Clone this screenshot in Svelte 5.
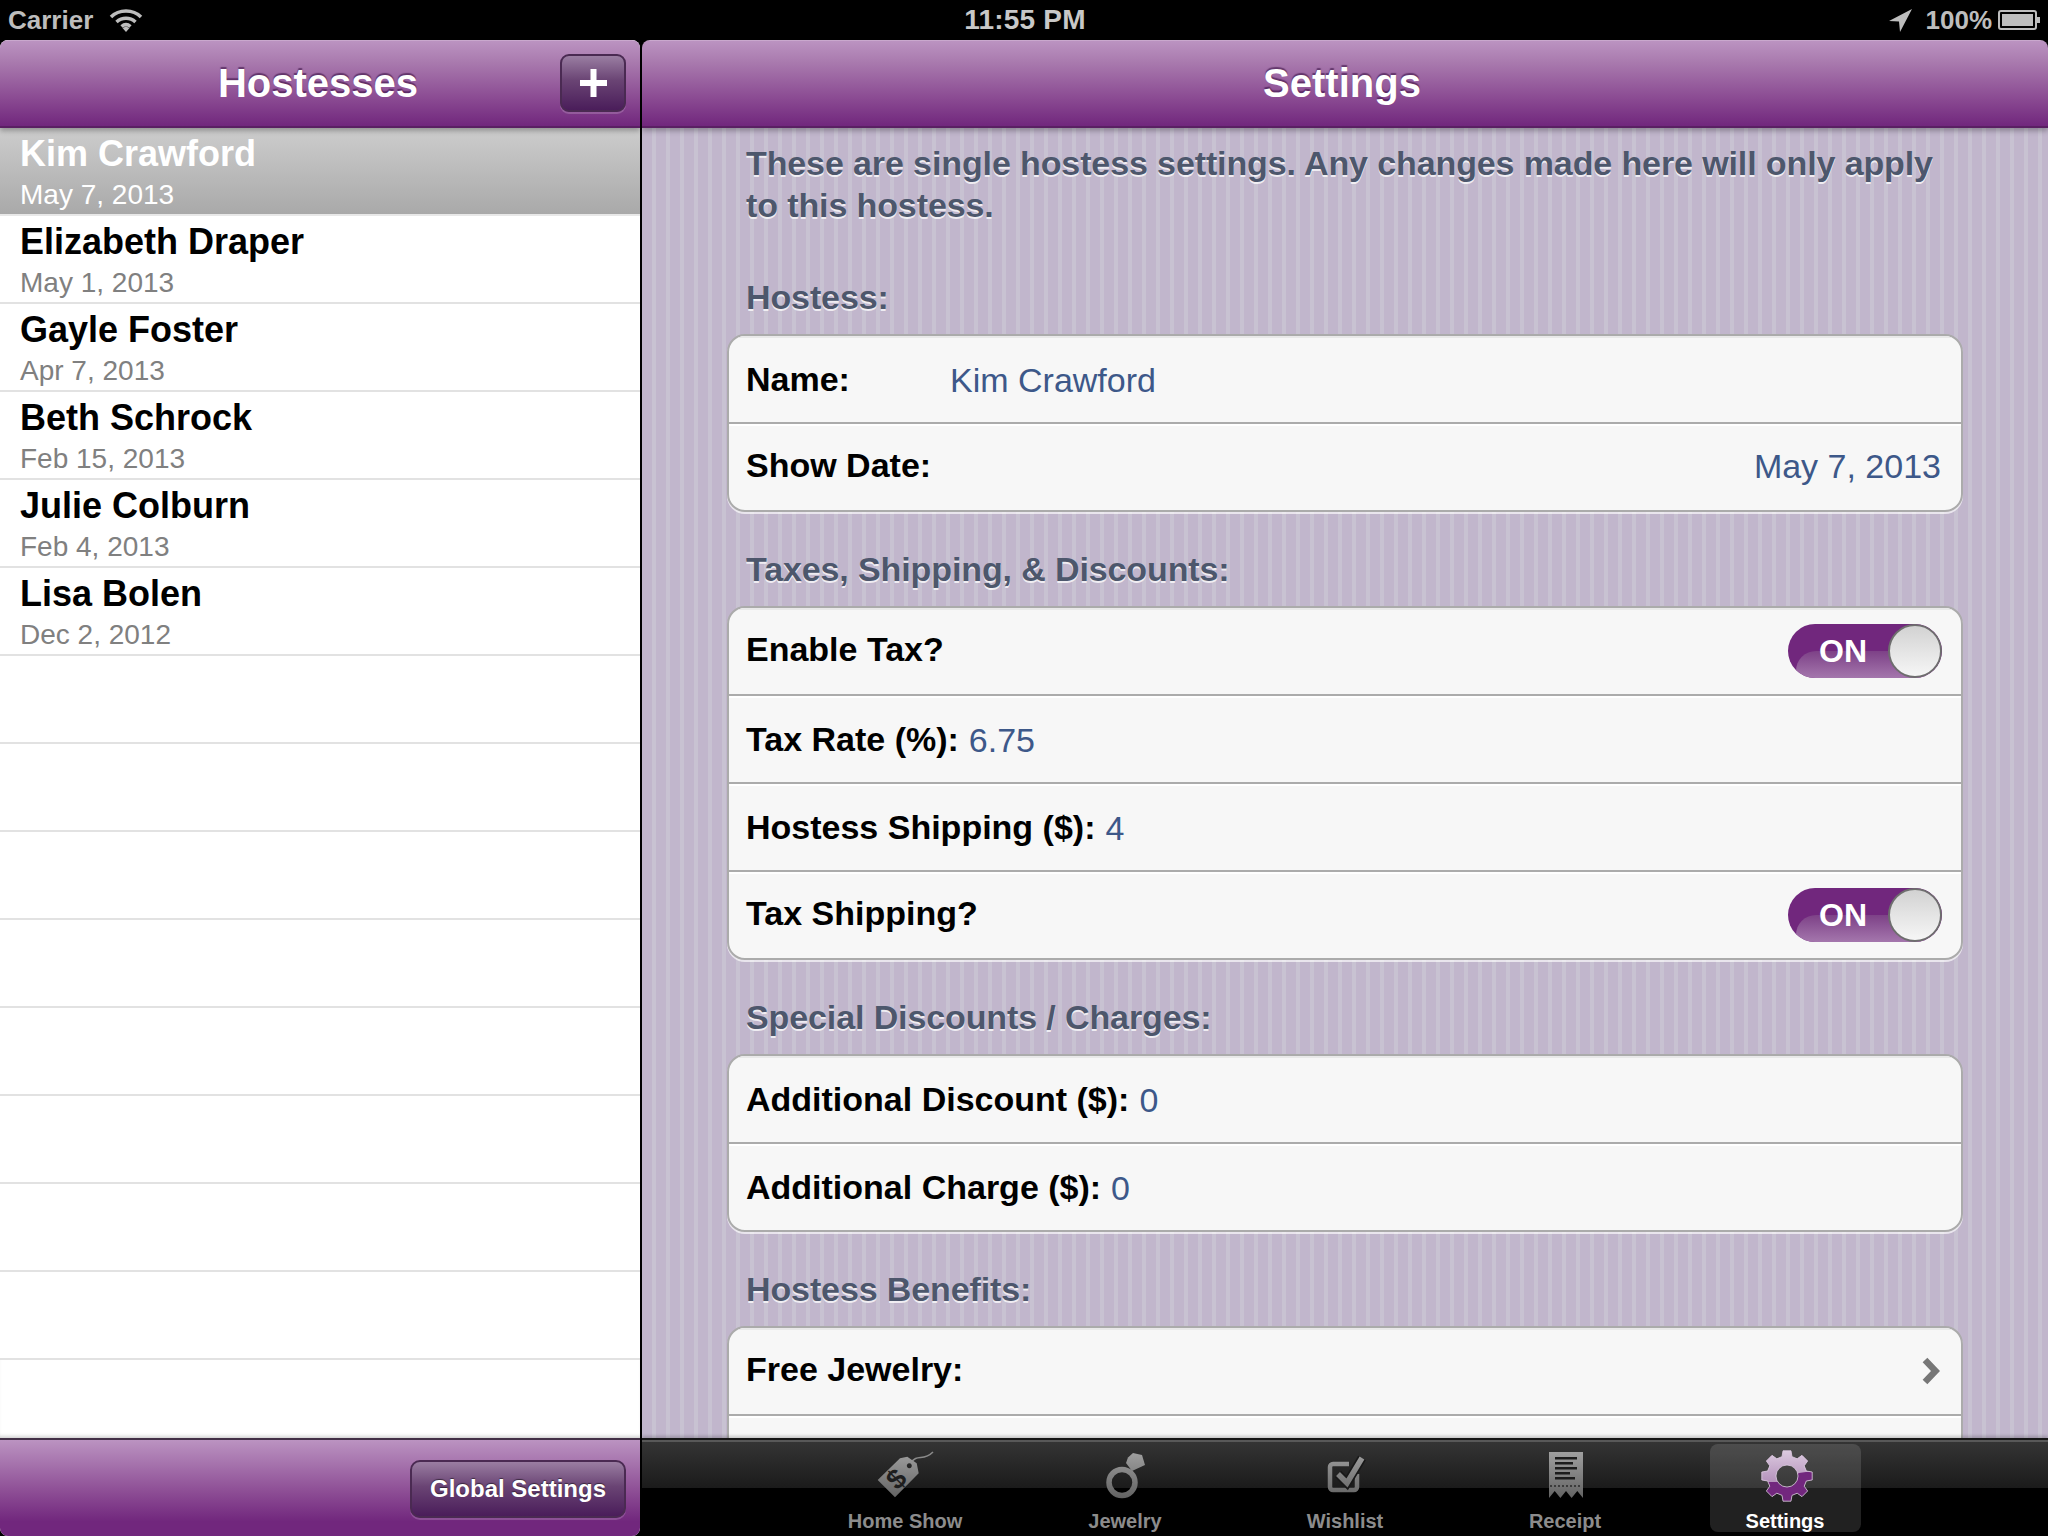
<script>
  const hostesses = [
    ['Kim Crawford', 'May 7, 2013'],
    ['Elizabeth Draper', 'May 1, 2013'],
    ['Gayle Foster', 'Apr 7, 2013'],
    ['Beth Schrock', 'Feb 15, 2013'],
    ['Julie Colburn', 'Feb 4, 2013'],
    ['Lisa Bolen', 'Dec 2, 2012'],
    ...Array(8).fill(['', ''])
  ];

  function gearPath(cx, cy, ro, ri, hole, n) {
    let d = '';
    const step = (Math.PI * 2) / n;
    for (let i = 0; i < n; i++) {
      const a = -Math.PI / 2 + i * step;
      const pts = [
        [ri, a - step * 0.32], [ro, a - step * 0.2], [ro, a + step * 0.2], [ri, a + step * 0.32]
      ];
      pts.forEach(([r, t], j) => {
        const x = (cx + r * Math.cos(t)).toFixed(2);
        const y = (cy + r * Math.sin(t)).toFixed(2);
        d += (i === 0 && j === 0 ? 'M' : 'L') + x + ' ' + y + ' ';
      });
    }
    d += 'Z ';
    d += `M${cx - hole} ${cy} a${hole} ${hole} 0 1 0 ${hole * 2} 0 a${hole} ${hole} 0 1 0 ${-hole * 2} 0 Z`;
    return d;
  }
  const gear = gearPath(32, 26, 25.5, 20, 11, 8);
</script>

<div class="screen">
  <div class="status">
    <div class="st-left">
      <span>Carrier</span>
      <svg width="34" height="24" viewBox="0 0 34 24" class="wifi">
        <path d="M2 9 C10 1 24 1 32 9" />
        <path d="M7.5 14 C13 9 21 9 26.5 14" />
        <path d="M12.5 18.5 C15.5 16 18.500 16 21.500 18.500" />
        <polygon class="dot" points="17,24 13.500,20 17,18.500 20.500,20" />
      </svg>
    </div>
    <div class="st-time">11:55 PM</div>
    <div class="st-right">
      <svg width="24" height="24" viewBox="0 0 24 24"><polygon class="fillg" points="24,1 1,13 11,13.500 12,24" /></svg>
      <span class="pct">100%</span>
      <svg width="44" height="22" viewBox="0 0 44 22" class="batt">
        <rect class="bo" x="1" y="2" width="37" height="18" rx="2" />
        <rect class="fillg" x="4" y="5" width="31" height="12" />
        <rect class="fillg" x="39" y="8" width="3" height="6" />
      </svg>
    </div>
  </div>

  <div class="split">
    <aside class="left">
      <header class="nav lnav">
        <h1 class="ltitle">Hostesses</h1>
        <button class="add" aria-label="Add">
          <svg width="27" height="28" viewBox="0 0 27 28"><rect x="10.500" y="0" width="6" height="28" fill="#fff"/><rect x="0" y="11" width="27" height="6" fill="#fff"/></svg>
        </button>
      </header>
      <ul class="list">
        {#each hostesses as h, i}
          <li class="item" class:sel={i === 0}>
            {#if h[0]}
              <div class="who">{h[0]}</div>
              <div class="when">{h[1]}</div>
            {/if}
          </li>
        {/each}
      </ul>
      <footer class="lfoot">
        <button class="global">Global Settings</button>
      </footer>
    </aside>

    <main class="right">
      <header class="nav rnav"><h1>Settings</h1></header>
      <div class="content">
        <p class="intro">These are single hostess settings. Any changes made here will only apply to this hostess.</p>

        <h2 class="first">Hostess:</h2>
        <div class="group">
          <div class="row"><b class="name-l">Name:</b><span class="val">Kim Crawford</span></div>
          <div class="row between"><b>Show Date:</b><span class="val">May 7, 2013</span></div>
        </div>

        <h2>Taxes, Shipping, &amp; Discounts:</h2>
        <div class="group">
          <div class="row between"><b>Enable Tax?</b>
            <div class="switch"><span class="on">ON</span><span class="knob"></span></div>
          </div>
          <div class="row"><b>Tax Rate (%):</b><span class="val gap">6.75</span></div>
          <div class="row"><b>Hostess Shipping ($):</b><span class="val gap">4</span></div>
          <div class="row between"><b>Tax Shipping?</b>
            <div class="switch"><span class="on">ON</span><span class="knob"></span></div>
          </div>
        </div>

        <h2>Special Discounts / Charges:</h2>
        <div class="group">
          <div class="row"><b>Additional Discount ($):</b><span class="val gap">0</span></div>
          <div class="row"><b>Additional Charge ($):</b><span class="val gap">0</span></div>
        </div>

        <h2>Hostess Benefits:</h2>
        <div class="group">
          <div class="row between"><b>Free Jewelry:</b>
            <svg class="chev" width="18" height="28" viewBox="0 0 18 28"><path d="M3 3 L13.500 14 L3 25" /></svg>
          </div>
          <div class="row"></div>
        </div>
      </div>

      <nav class="tabs">
        <div class="tab">
          <svg width="60" height="52" viewBox="0 0 60 52">
            <defs>
              <linearGradient id="ig" gradientUnits="userSpaceOnUse" x1="0" y1="0" x2="0" y2="50">
                <stop offset="0" stop-color="#a2a2a2"/><stop offset="1" stop-color="#606060"/>
              </linearGradient>
              <linearGradient id="gl" gradientUnits="userSpaceOnUse" x1="0" y1="0" x2="0" y2="32">
                <stop offset="0" stop-color="#dccbe0"/><stop offset="1" stop-color="#b592bc"/>
              </linearGradient>
              <clipPath id="gc"><path d={gear} clip-rule="evenodd"/></clipPath>
            </defs>
            <path d="M36 13 C42 3 48 12 58 2" fill="none" stroke="#8a8a8a" stroke-width="1.600"/>
            <path fill="url(#ig)" fill-rule="evenodd" d="M2.700 30 L25 8.300 L32.300 6.700 L41.700 13.300 L43.700 23.300 L20 47.300 Z M34.300 13.200 a2.500 2.500 0 1 0 .01 0 Z"/>
            <text x="0" y="0" transform="translate(21.700 29.300) rotate(-45)" class="dollar" text-anchor="middle" dy="9">$</text>
          </svg>
          <span>Home Show</span>
        </div>
        <div class="tab">
          <svg width="60" height="52" viewBox="0 0 60 52">
            <circle cx="27" cy="32.500" r="13" fill="none" stroke="url(#ig)" stroke-width="5.500"/>
            <polygon fill="url(#ig)" points="33,7.500 38,3 47,5 50,15 37,21 31,13"/>
          </svg>
          <span>Jewelry</span>
        </div>
        <div class="tab">
          <svg width="60" height="52" viewBox="0 0 60 52">
            <path d="M42 24 V37 a3 3 0 0 1 -3 3 H18 a3 3 0 0 1 -3 -3 V17 a3 3 0 0 1 3 -3 H34" fill="none" stroke="url(#ig)" stroke-width="4.500"/>
            <path d="M23 24 L32 33 L47 8" fill="none" stroke="#181818" stroke-width="9"/>
            <path d="M23 24 L32 33 L47 8" fill="none" stroke="url(#ig)" stroke-width="5.500"/>
          </svg>
          <span>Wishlist</span>
        </div>
        <div class="tab">
          <svg width="60" height="52" viewBox="0 0 60 52">
            <polygon fill="url(#ig)" points="14,2 48,2 48,48 42.300,41 36.600,48 31,41 25.400,48 19.700,41 14,48"/>
            <g fill="#1c1c1c">
              <rect x="20" y="7" width="22" height="2.500"/>
              <rect x="20" y="12" width="18" height="2.500"/>
              <rect x="20" y="17" width="22" height="2.500"/>
              <rect x="20" y="22" width="15" height="2.500"/>
              <rect x="20" y="27" width="20" height="2.500"/>
            </g>
            <line x1="15" y1="36" x2="47" y2="36" stroke="#2a2a2a" stroke-width="1.500" stroke-dasharray="2 2"/>
          </svg>
          <span>Receipt</span>
        </div>
        <div class="tab active">
          <svg width="60" height="52" viewBox="0 0 60 52">
            <path d={gear} fill="#72277e" fill-rule="evenodd"/>
            <g clip-path="url(#gc)">
              <path d="M0 32 L18 32 Q32 32 44 23 L64 20 V0 H0 Z" fill="url(#gl)"/>
            </g>
            <path d={gear} fill="none" stroke="#e0d2e3" stroke-opacity="0.8" stroke-width="1" stroke-linejoin="round"/>
          </svg>
          <span>Settings</span>
        </div>
      </nav>
    </main>
  </div>
</div>

<style>
  :global(body) { margin: 0; background: #000; }
  * { box-sizing: border-box; }
  .screen {
    width: 2048px; height: 1536px; background: #000; overflow: hidden;
    display: flex; flex-direction: column;
    font-family: "Liberation Sans", Arial, sans-serif;
  }
  .status {
    height: 40px; flex: none; display: flex; align-items: center; justify-content: space-between;
    position: relative; color: #bdbdbd; font-size: 26px; font-weight: 700; padding: 0 6px 0 8px;
  }
  .st-left { display: flex; align-items: center; gap: 16px; }
  .st-time {
    position: absolute; left: 2px; right: 0; text-align: center; font-size: 28px; color: #c8c8c8; letter-spacing: 0.2px;
  }
  .st-right { display: flex; align-items: center; gap: 14px; }
  .pct { margin-right: -8px; }
  .wifi path { fill: none; stroke: #bdbdbd; stroke-width: 3.500; }
  .wifi .dot { fill: #bdbdbd; }
  .fillg { fill: #bdbdbd; }
  .bo { fill: none; stroke: #bdbdbd; stroke-width: 2; }

  .split { flex: 1; display: flex; min-height: 0; gap: 2px; }
  .left { width: 640px; flex: none; display: flex; flex-direction: column; background: #fff; border-radius: 8px; overflow: hidden; }
  .right { flex: 1; display: flex; flex-direction: column; min-width: 0; border-radius: 8px 8px 0 0; overflow: hidden; }

  .nav {
    height: 88px; flex: none; display: flex; align-items: center; justify-content: center;
    position: relative; z-index: 2;
    background: linear-gradient(#bb93c1, #a97aae 25%, #8a4a92 68%, #71277d 100%);
    border-top: 1px solid #c9a8cd; border-bottom: 2px solid #5a1f63;
    box-shadow: 0 3px 5px rgba(0, 0, 0, 0.28);
  }
  h1 {
    margin: 0; font-size: 40px; font-weight: 700; color: #fff;
    text-shadow: 0 -2px 1px rgba(50, 10, 60, 0.55);
  }
  .ltitle { margin-right: 4px; }
  .rnav h1 { margin-right: 6px; }
  .add {
    position: absolute; left: 560px; top: 13px; width: 66px; height: 58px; padding: 0;
    display: flex; align-items: center; justify-content: center;
    border: 2px solid #4a2a52; border-radius: 9px;
    background: linear-gradient(#9a7ea2, #6a4474 45%, #4a1d5a);
    box-shadow: 0 2px 0 rgba(255, 255, 255, 0.18);
  }

  .list { list-style: none; margin: 0; padding: 0; flex: 1; overflow: hidden; box-shadow: inset 0 -4px 4px -3px rgba(0,0,0,.25); }
  .item { height: 88px; border-bottom: 2px solid #e2e2e2; padding: 5px 20px 0; background: #fff; }
  .item.sel { background: linear-gradient(#cdcdcd, #a9a9a9); border-bottom-color: #e8e8e8; }
  .who { font-size: 36px; font-weight: 700; line-height: 42px; color: #000; }
  .when { font-size: 28px; line-height: 34px; margin-top: 3px; color: #808080; }
  .sel .who, .sel .when { color: #fff; }

  .lfoot {
    height: 98px; flex: none; display: flex; justify-content: flex-end; padding: 20px 14px 0 0;
    background: linear-gradient(#bb93c1, #8c4c94 55%, #71277d 85%);
    border-top: 2px solid #433047;
  }
  .global {
    width: 216px; height: 58px; padding: 0; font: 700 24px "Liberation Sans", Arial, sans-serif; color: #fff;
    border: 2px solid #4a2a52; border-radius: 10px;
    background: linear-gradient(#9a7ea2, #6a4474 45%, #4a1d5a);
    box-shadow: 0 2px 0 rgba(255, 255, 255, 0.18);
    text-shadow: 0 -1px 1px rgba(0, 0, 0, 0.5);
  }

  .content {
    flex: 1; min-height: 0; overflow: hidden; padding: 14px 85px 0;
    background: repeating-linear-gradient(90deg, #c1b6cc 0, #c1b6cc 10px, #c8c2d2 10px, #c8c2d2 14px);
  }
  .intro, h2 {
    color: #4d576c; font-size: 34px; font-weight: 700; line-height: 42px; margin: 0;
    text-shadow: 0 2px 0 rgba(255, 255, 255, 0.75);
    padding: 0 19px;
    letter-spacing: -0.11px;
  }
  h2 { margin: 36px 0 16px; }
  h2.first { margin-top: 50px; }

  .group {
    border: 2px solid #ababab; border-radius: 18px; background: #f7f7f7; overflow: hidden;
    box-shadow: 0 2px 0 rgba(255, 255, 255, 0.65);
  }
  .row {
    height: 88px; border-bottom: 2px solid #ababab; display: flex; align-items: center;
    padding: 0 20px 0 17px; font-size: 34px; color: #000;
    box-shadow: inset 0 2px 0 #fff;
  }
  .row:first-child { box-shadow: inset 0 2px 0 #e9e9e9; }
  .row:last-child { height: 86px; border-bottom: 0; }
  .between { justify-content: space-between; }
  .row b { font-weight: 700; }
  .between b { margin-bottom: 4px; }
  .name-l { width: 204px; }
  .val { color: #3d5889; margin-top: 2px; }
  .between .val { margin-top: 0; margin-bottom: 2px; }
  .gap { margin-left: 10px; }

  .switch {
    width: 154px; height: 54px; border-radius: 27px; position: relative; overflow: hidden;
    background: #71277d; flex: none; margin-right: -1px;
  }
  .switch::before {
    content: ""; position: absolute; left: 8px; top: 27px; width: 130px; height: 40px;
    border-radius: 20px 0 0 0;
    background: linear-gradient(#7d4187, #b48cbc 95%);
  }
  .on {
    position: absolute; left: 31px; top: 0; line-height: 54px; font-size: 32px; font-weight: 700; color: #fff;
  }
  .knob {
    position: absolute; right: 0; top: 0; width: 54px; height: 54px; border-radius: 50%;
    border: 2px solid #6e6e6e; background: linear-gradient(#d2d2d2, #f6f6f6);
  }
  .chev { fill: none; margin: 0 1px 0 0; }
  .chev path { fill: none; stroke: #777; stroke-width: 6.500; }

  .tabs {
    height: 98px; flex: none; display: flex; justify-content: center;
    position: relative; z-index: 2;
    border-top: 2px solid #161616;
    background: linear-gradient(#585858, #585858 2px, #343434 2px, #1b1b1b 48px, #000 48px);
    box-shadow: 0 -2px 3px rgba(0, 0, 0, 0.2);
  }
  .tab {
    width: 220px; display: flex; flex-direction: column; align-items: center; padding-top: 10px;
    color: #8c8c8c; font-size: 20px; font-weight: 700; position: relative;
  }
  .tab span { line-height: 24px; margin-top: 7px; }
  .tab.active { color: #fff; }
  .tab.active::before {
    content: ""; position: absolute; left: 35px; top: 4px; width: 151px; height: 88px; border-radius: 8px;
    background: rgba(255, 255, 255, 0.13);
  }
  .tab svg, .tab span { position: relative; }
  .dollar { font: 700 28px "Liberation Sans", Arial, sans-serif; fill: #1e1e1e; }
</style>
